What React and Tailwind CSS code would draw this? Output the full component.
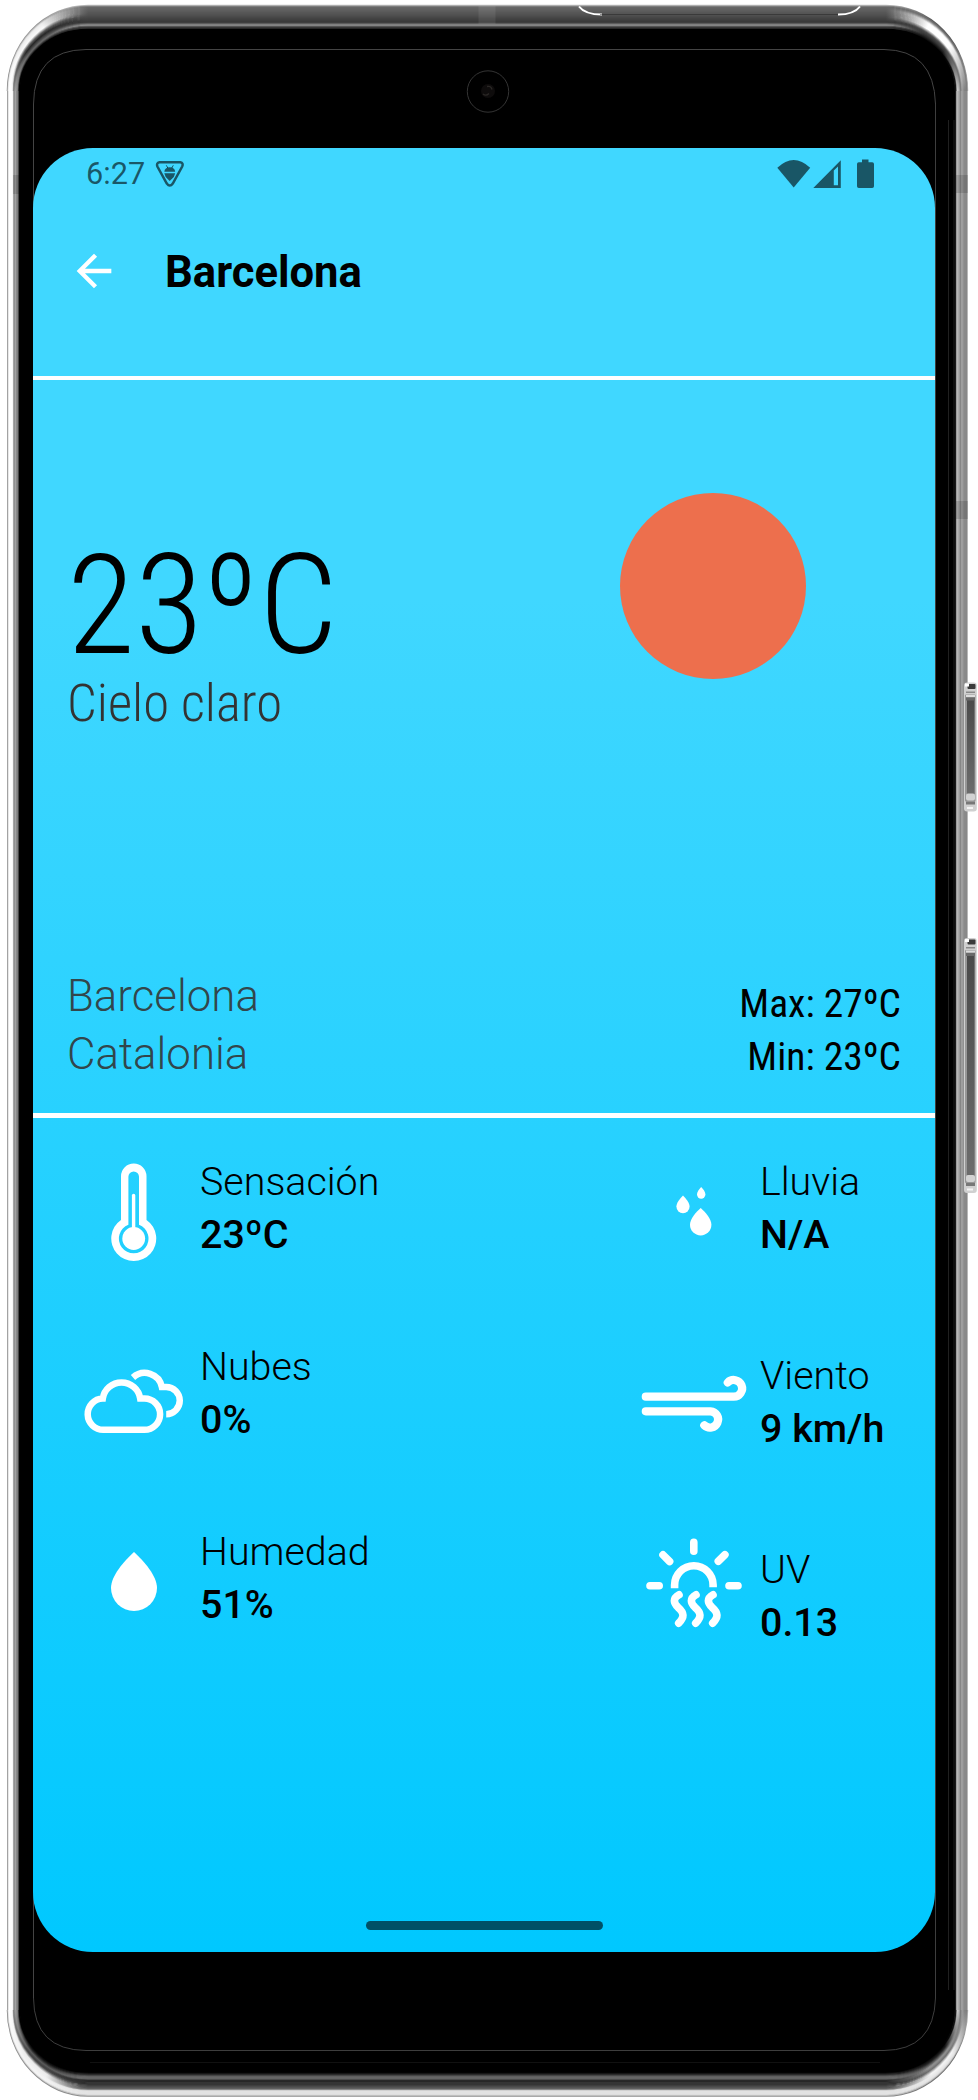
import React from "react";

/* ---------- Phone body ---------- */

// Brightness profiles of the metal rim, from the outer edge (0) to the glass (1).
const rim = {
  left: [[0, 130], [0.1, 240], [0.17, 255], [0.45, 250], [0.54, 120], [0.7, 160], [0.88, 130], [0.98, 25], [1, 0]],
  top: [[0, 190], [0.06, 105], [0.35, 85], [0.72, 55], [0.79, 120], [0.83, 150], [0.9, 60], [0.96, 50], [1, 0]],
  right: [[0, 190], [0.08, 125], [0.3, 130], [0.5, 160], [0.62, 115], [0.74, 180], [0.92, 210], [1, 20]],
  bottom: [[0, 140], [0.06, 225], [0.24, 225], [0.3, 90], [0.5, 38], [0.68, 45], [0.72, 110], [0.82, 110], [0.9, 50], [1, 0]],
  topLeft: [[0, 150], [0.1, 235], [0.35, 250], [0.5, 90], [0.62, 35], [0.85, 110], [1, 0]],
  topRight: [[0, 90], [0.1, 120], [0.22, 255], [0.5, 255], [0.65, 80], [0.85, 40], [1, 0]],
  bottomRight: [[0, 110], [0.1, 225], [0.35, 245], [0.5, 110], [0.65, 150], [0.85, 35], [1, 0]],
  bottomLeft: [[0, 140], [0.1, 245], [0.42, 235], [0.6, 60], [0.75, 90], [0.9, 20], [1, 0]],
};

function shade(stops, t) {
  let i = 1;
  while (i < stops.length - 1 && stops[i][0] < t) i++;
  const [a, va] = stops[i - 1];
  const [b, vb] = stops[i];
  const v = Math.round(va + (vb - va) * Math.min(1, Math.max(0, (t - a) / (b - a))));
  return `rgb(${v},${v},${v})`;
}

const RINGS = 25;

function Rim() {
  const cx1 = 88, cx2 = 886, cy1 = 91, cy2 = 2010;
  return Array.from({ length: RINGS }, (_, i) => {
    const t = i / (RINGS - 1);
    const l = 7.5 + 12 * t, r = 967.5 - 12 * t, y1 = 5.5 + 24 * t, y2 = 2096 - 24 * t;
    const corner = [
      ["topLeft", "left", "top", l, cy1, cx1, y1],
      ["topRight", "top", "right", cx2, y1, r, cy1],
      ["bottomRight", "right", "bottom", r, cy2, cx2, y2],
      ["bottomLeft", "bottom", "left", cx1, y2, l, cy2],
    ];
    return (
      <g key={i} fill="none">
        {corner.map(([name, from, to, xa, ya, xb, yb]) => (
          <g key={name}>
            <linearGradient id={`${name}${i}`} gradientUnits="userSpaceOnUse" x1={xa} y1={ya} x2={xb} y2={yb}>
              <stop offset="0" stopColor={shade(rim[from], t)} />
              <stop offset="0.35" stopColor={shade(rim[name], t)} />
              <stop offset="0.62" stopColor={shade(rim[name], t)} />
              <stop offset="1" stopColor={shade(rim[to], t)} />
            </linearGradient>
            <path
              d={`M${xa} ${ya}A${Math.abs(xb - xa)} ${Math.abs(yb - ya)} 0 0 1 ${xb} ${yb}`}
              stroke={`url(#${name}${i})`}
              strokeWidth="1.5"
            />
          </g>
        ))}
        <path d={`M${cx1} ${y1}H${cx2}`} stroke={shade(rim.top, t)} strokeWidth="1.3" />
        <path d={`M${cx1} ${y2}H${cx2}`} stroke={shade(rim.bottom, t)} strokeWidth="1.3" />
        <path d={`M${l} ${cy1}V${cy2}`} stroke={shade(rim.left, t)} strokeWidth="0.8" />
        <path d={`M${r} ${cy1}V${cy2}`} stroke={shade(rim.right, t)} strokeWidth="0.8" />
      </g>
    );
  });
}

function SideButton({ y, height }) {
  const b = y + height;
  return (
    <g>
      <rect x="964" y={y} width="12.8" height={height} rx="3" fill="#d0d0d0" />
      <rect x="965" y={y + 12} width="10.5" height={height - 22} rx="1" fill="#979797" />
      <rect x="967" y={y + 17} width="7.5" height={height - 34} fill="url(#key)" />
      <rect x="967.5" y={y + 1.5} width="8" height="5" rx="1" fill="#3a3a3a" />
      <rect x="965" y={y + 1} width="4" height="3" fill="#fff" />
      <rect x="966" y={y + 9} width="9" height="1.5" fill="#8a8a8a" />
      <rect x="966" y={y + 12.500} width="9" height="2" fill="#ddd" />
      <rect x="966" y={y + 15} width="9" height="3" fill="#6a6a6a" />
      <rect x="966" y={b - 18} width="9" height="7" rx="2" fill="#d2d2d2" />
      <rect x="966" y={b - 10} width="9" height="3" fill="#777" />
      <rect x="967" y={b - 4.500} width="6" height="2" fill="#f4f4f4" />
    </g>
  );
}

function PhoneBody() {
  return (
    <svg className="absolute inset-0" width="978" height="2100" viewBox="0 0 978 2100" aria-hidden="true">
      <defs>
        <linearGradient id="key" x1="0" y1="0" x2="0" y2="1">
          <stop offset="0" stopColor="#4a4a4a" />
          <stop offset="1" stopColor="#6c6c6c" />
        </linearGradient>
      </defs>
      <rect x="16" y="20" width="943" height="2062" rx="72" fill="#000" />
      <Rim />
      <SideButton y={682.5} height={129} />
      <SideButton y={938} height={255} />
      <g fill="#000" fillOpacity="0.14">
        <rect x="13" y="175" width="6" height="19" />
        <rect x="956" y="175" width="12" height="18" />
        <rect x="956" y="501" width="12" height="18" />
      </g>
      <rect x="478.5" y="6" width="17" height="18" fill="#fff" fillOpacity="0.08" />
      <path d="M579 6.500Q585 14.500 602 14.500" fill="none" stroke="#fff" strokeWidth="2" />
      <path d="M600 14.500H838" fill="none" stroke="#222" strokeOpacity="0.5" />
      <path d="M838 14.500Q854 14.500 860 6.500" fill="none" stroke="#fff" strokeWidth="2" />
      <path d="M948.500 120V1990" stroke="#202020" />
      <path d="M954 120V1990" stroke="#1c1c1c" />
      <path d="M90 2062.500H880" stroke="#111" />
      <path d="M33.500 1998V104Q34 50 86 49.500H884Q934 50 935.500 104" fill="none" stroke="#444" />
      <path d="M33.500 1998Q34 2050 86 2050.500H884Q934 2050 935.500 1998V104" fill="none" stroke="#3e3e3e" />
      <circle cx="488" cy="91.5" r="20.7" fill="none" stroke="#3a3a3a" strokeWidth="0.9" />
      <circle cx="488" cy="91" r="7" fill="#0e0c0c" />
      <path d="M483 94q3 2.500 6-.5M487 86.500q4-1 5 3" fill="none" stroke="#2a2725" strokeWidth="1.3" />
    </svg>
  );
}

/* ---------- Status bar icons ---------- */

function DebugIcon() {
  return (
    <svg className="ml-[10px] h-[30px] w-[30px]" viewBox="155 160 30 30">
      <path
        d="M159.500 163.300H180.300Q183.800 164 182.200 167.500L172.800 184.500Q169.800 188.500 166.800 184.500L157.400 167.500Q156 164 159.500 163.300Z"
        fill="none"
        stroke="currentColor"
        strokeWidth="2.5"
      />
      <path d="M164.300 172.700Q164.800 168.200 169.700 168.200Q174.700 168.200 175.200 172.700ZM164.300 174.300H175.200L173.800 178L169.700 182L165.700 178Z" fill="currentColor" />
      <path d="M166.300 166.300L167.800 169M173.300 166.300L171.800 169" stroke="currentColor" strokeWidth="1" />
    </svg>
  );
}

function SignalIcons() {
  return (
    <svg className="h-[32px] w-[100px]" viewBox="776 158 100 32" fill="currentColor">
      <path d="M793.700 187.500L777.300 167.800Q793.700 152.200 810.200 167.800Z" />
      <path fillRule="evenodd" d="M813.300 188L840.800 160.300V188ZM833.800 170.500V185.300H838V166.500Z" />
      <path d="M862 159.500h6.500v2.700h3.700q1.800 0 1.800 1.800v22.200q0 1.800-1.800 1.800h-13.400q-1.800 0-1.800-1.800v-22.200q0-1.800 1.800-1.800h3.200z" />
    </svg>
  );
}

/* ---------- Weather detail icons ---------- */

const icons = {
  feel: (
    <svg className="h-[106px] w-[110px]" viewBox="79 1155 110 106" overflow="visible" fill="#fff">
      <path
        fillRule="evenodd"
        d="M121 1176.300a12.750 12.750 0 0 1 25.500 0V1220A22.500 22.500 0 1 1 121 1220ZM128.400 1176.700V1224.700A14.800 14.800 0 1 0 139 1224.700V1176.700a5.300 5.300 0 0 0-10.600 0Z"
      />
      <path d="M131.900 1195.500a1.700 1.700 0 0 1 3.400 0V1230h-3.400z" />
      <circle cx="133.7" cy="1238.5" r="11.4" />
    </svg>
  ),
  clouds: (
    <svg className="h-[106px] w-[110px]" viewBox="79 1340 110 106" fill="none" stroke="#fff" strokeWidth="6.5">
      <path d="M102.800 1398.600A18.900 18.900 0 0 1 140.200 1398.600H144.500A15.600 15.600 0 0 1 144.500 1429.800H103.800A15.600 15.600 0 0 1 102.800 1398.600Z" />
      <path d="M133 1377.500A17.500 17.500 0 0 1 161.900 1387H166.200A13.600 13.600 0 0 1 166.200 1414.200" />
    </svg>
  ),
  humidity: (
    <svg className="h-[106px] w-[110px]" viewBox="79 1525 110 106" fill="#fff">
      <path d="M134 1552C124 1561 111 1576 111 1588a23 23 0 0 0 46 0C157 1576 144 1561 134 1552Z" />
    </svg>
  ),
  rain: (
    <svg className="h-[106px] w-[110px]" viewBox="639 1155 110 106" fill="#fff">
      <path d="M700.700 1208C696 1212 690 1219 690 1224.700a10.700 10.700 0 0 0 21.400 0C711.400 1219 705.400 1212 700.700 1208Z" />
      <path d="M683 1195.500C680 1198.500 676.400 1203 676.400 1206.600a6.600 6.600 0 0 0 13.200 0C689.600 1203 686 1198.500 683 1195.500Z" />
      <path d="M701.200 1187C699.200 1189 697 1192 697 1194.600a4.200 4.200 0 0 0 8.400 0C705.400 1192 703.200 1189 701.200 1187Z" />
    </svg>
  ),
  wind: (
    <svg className="h-[106px] w-[110px]" viewBox="639 1349 110 106" fill="none" stroke="#fff" strokeWidth="8.2" strokeLinecap="round">
      <path d="M645.800 1396.700H733.700A8.350 8.350 0 1 0 727.800 1382.500" />
      <path d="M645.800 1411.300H710.500A8.150 8.150 0 1 1 704.300 1425.300" />
    </svg>
  ),
  uv: (
    <svg className="h-[106px] w-[110px]" viewBox="639 1530 110 106" fill="none" stroke="#fff" strokeWidth="7.6" strokeLinecap="round">
      <path d="M693.800 1542.300V1551.200M650 1585.800H659.200M729 1585.800H738M663 1554.900L669.600 1561.500M724.900 1554.700L718.300 1561.300" />
      <path strokeLinecap="butt" d="M674.600 1588.300V1585A19.200 19.200 0 0 1 713.100 1585V1587.300" />
      <path d="M679 1594.800C672.500 1598.500 673.500 1603 678 1607.300C684.500 1613 684.500 1617 678.700 1623.200M696 1594.800C689.500 1598.500 690.500 1603 695 1607.300C701.500 1613 701.500 1617 695.700 1623.200M713 1594.800C706.500 1598.500 707.500 1603 712 1607.300C718.500 1613 718.500 1617 712.700 1623.200" />
    </svg>
  ),
};

function Detail({ icon, label, value, iconClass = "" }) {
  return (
    <div className="flex h-[106px] gap-[11px]">
      <div className={iconClass}>{icons[icon]}</div>
      <div className="whitespace-nowrap text-[39.4px] leading-[53px] text-black">
        <div className="font-light">{label}</div>
        <div className="font-medium">{value}</div>
      </div>
    </div>
  );
}

/* ---------- Screen ---------- */

export default function App() {
  return (
    <div className="relative h-[2100px] w-[978px] overflow-hidden bg-white pl-[33px] pt-[148px] font-['Roboto',sans-serif]">
      <PhoneBody />
      <main className="relative flex h-[1804px] w-[902px] flex-col overflow-hidden rounded-[60px] bg-linear-to-b/srgb from-[#40d7ff] from-25% to-[#00c8ff]">
        <div className="flex h-[52px] items-center justify-between pl-[53px] pr-[59px] text-black/60">
          <div className="flex items-center">
            <span className="text-[30.7px] leading-[52px]">6:27</span>
            <DebugIcon />
          </div>
          <SignalIcons />
        </div>
        <header className="flex h-[176px] items-start pl-[35px] pt-[44px]">
          <svg className="mt-[1px] h-[52px] w-[52px]" viewBox="0 0 24 24" fill="#fff">
            <path d="M20 11H7.830l5.590-5.590L12 4l-8 8 8 8 1.410-1.410L7.830 13H20v-2z" />
          </svg>
          <h1 className="ml-[45px] mt-[1px] text-[43.6px] font-bold leading-[56px] text-black">Barcelona</h1>
        </header>
        <div className="h-[4.4px] shrink-0 bg-white" />

        <section className="flex h-[732.6px] flex-col justify-between pl-[34px] pr-[34px]">
          <div className="flex justify-between pt-[116px]">
            <div className="pt-[38.5px] font-['Roboto_Condensed','Roboto',sans-serif] font-light [font-stretch:75%]">
              <div className="text-[139.8px] leading-[141px] text-black">23ºC</div>
              <div className="text-[52.7px] leading-[54px] text-[#333]">Cielo claro</div>
            </div>
            <div className="mr-[95px] mt-[-3px] h-[186px] w-[186px] rounded-full bg-[#ed6f4d]" />
          </div>
          <div className="flex items-end justify-between pb-[29.5px]">
            <div className="text-[43.8px] font-light leading-[58px] text-[#333]/90">
              <div>Barcelona</div>
              <div>Catalonia</div>
            </div>
            <div className="text-right font-['Roboto_Condensed','Roboto',sans-serif] text-[39.5px] leading-[53px] text-black [font-stretch:75%]">
              <div>Max: 27ºC</div>
              <div>Min: 23ºC</div>
            </div>
          </div>
        </section>
        <div className="h-[4.6px] shrink-0 bg-white" />

        <section className="flex flex-1 gap-[235px] pl-[46px] pt-[37px]">
          <div className="flex w-[325px] flex-col gap-[79px]">
            <Detail icon="feel" label="Sensación" value="23ºC" />
            <Detail icon="clouds" label="Nubes" value="0%" />
            <Detail icon="humidity" label="Humedad" value="51%" />
          </div>
          <div className="flex flex-col gap-[88px]">
            <Detail icon="rain" label="Lluvia" value="N/A" />
            <Detail icon="wind" label="Viento" value="9 km/h" />
            <Detail icon="uv" label="UV" value="0.13" iconClass="-mt-[13px]" />
          </div>
        </section>
        <div className="mb-[22px] ml-[333px] h-[9px] w-[237px] shrink-0 rounded-full bg-black/60" />
      </main>
    </div>
  );
}
